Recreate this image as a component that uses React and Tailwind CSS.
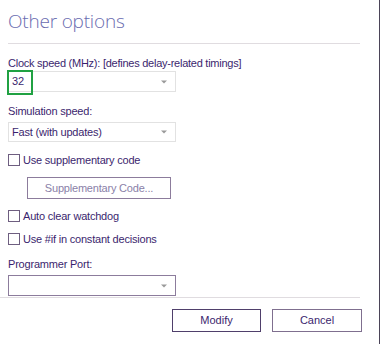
import React from "react";

const textFont = { fontFamily: '"Liberation Sans", Arial, sans-serif' };

function Arrow() {
  return (
    <svg width="6" height="4" viewBox="0 0 6 4" className="absolute right-[8px] top-1/2 -translate-y-1/2">
      <path d="M0 0.5 L6 0.5 L3 3.5 Z" fill="#9a9a9a" />
    </svg>
  );
}

function Combo({ value, dark, highlight, className = "" }) {
  return (
    <div
      className={`relative ml-[8px] w-[168px] h-[21px] bg-white border flex items-center pl-[3px] text-[11px] tracking-[-0.2px] text-[#3b1f6e] ${
        dark ? "border-[#8c7c9c]" : "border-[#e2e2e2]"
      } ${className}`}
    >
      <span>{value}</span>
      <Arrow />
      {highlight && (
        <div className="absolute -left-[2px] -top-[2px] w-[26px] h-[25px] border-2 border-[#20a142]" />
      )}
    </div>
  );
}

function Check({ label, className = "" }) {
  return (
    <div className={`flex items-center h-[14px] ml-[8px] ${className}`}>
      <span className="w-[12px] h-[12px] border border-[#6e5e80] bg-white" />
      <span className="ml-[3px] text-[11px] tracking-[-0.2px] text-[#3b1f6e]">{label}</span>
    </div>
  );
}

export default function App() {
  return (
    <div className="w-[380px] h-[344px] bg-white border-r border-[#4b4458] flex flex-col" style={textFont}>
      <div className="h-[43px] pl-[8px] pt-[8px]">
        <h1
          className="text-[19px] leading-[26px] font-light tracking-[-0.2px] text-[#6a6cb0]"
          style={{ fontFamily: '"Open Sans", sans-serif' }}
        >
          Other options
        </h1>
      </div>
      <div className="ml-[8px] w-[352px] h-px bg-[#e0dce0]" />

      <p className="mt-[12px] ml-[8px] h-[14px] leading-[14px] text-[11px] tracking-[-0.25px] text-[#3b1f6e]">
        Clock speed (MHz): [defines delay-related timings]
      </p>
      <Combo value="32" highlight className="mt-[1px]" />

      <p className="mt-[12px] ml-[8px] h-[14px] leading-[14px] text-[11px] tracking-[-0.2px] text-[#3b1f6e]">
        Simulation speed:
      </p>
      <Combo value="Fast (with updates)" className="mt-[4px] !h-[20px]" />

      <Check label="Use supplementary code" className="mt-[11px]" />
      <button className="mt-[10px] ml-[27px] w-[144px] h-[22px] border border-[#8c7c9c] bg-white text-[11px] tracking-[-0.2px] text-[#8a7fa8]">
        Supplementary Code...
      </button>

      <Check label="Auto clear watchdog" className="mt-[10px]" />
      <Check label="Use #if in constant decisions" className="mt-[9px]" />

      <p className="mt-[11px] ml-[8px] h-[14px] leading-[14px] text-[11px] tracking-[-0.2px] text-[#3b1f6e]">
        Programmer Port:
      </p>
      <Combo value="" dark className="mt-[4px]" />

      <div className="mt-[1px] w-[360px] h-px bg-[#e0dce0]" />

      <div className="mt-[11px] flex gap-[11px] ml-[172px]">
        <button className="w-[89px] h-[23px] border border-[#4f3f6b] bg-white text-[11px] text-[#3b1f6e]">
          Modify
        </button>
        <button className="w-[90px] h-[23px] border border-[#7f6f8f] bg-white text-[11px] text-[#3b1f6e]">
          Cancel
        </button>
      </div>
    </div>
  );
}
